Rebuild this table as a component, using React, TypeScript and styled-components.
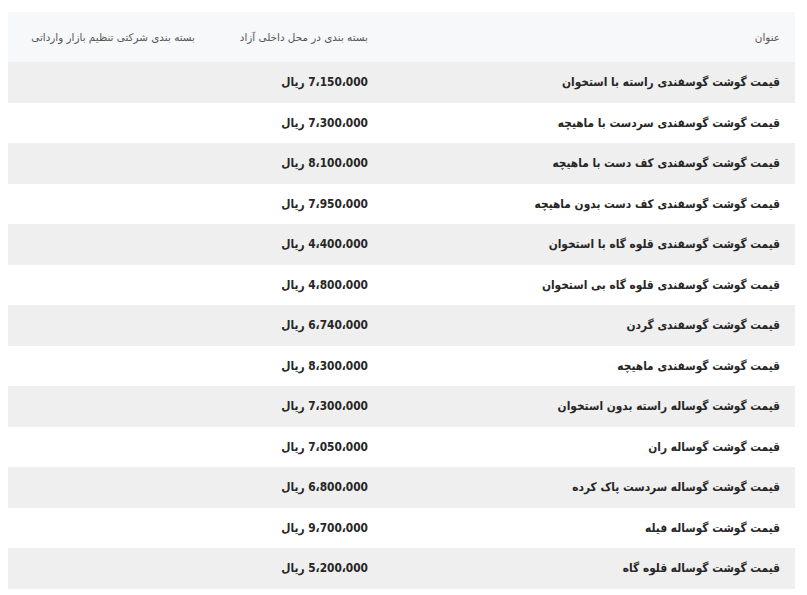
import React from "react";
import styled, { createGlobalStyle } from "styled-components";

const Global = createGlobalStyle`
  html, body { margin: 0; padding: 0; background: #ffffff; }
  body { font-family: "DejaVu Sans", "Liberation Sans", sans-serif; }
`;

const Page = styled.div`
  padding: 12px 12px 0 8px;
`;

const Table = styled.table`
  width: 787px;
  border-collapse: collapse;
  table-layout: fixed;
  direction: rtl;
`;

const HeadCell = styled.th<{ $w: number; $pr: number }>`
  box-sizing: border-box;
  width: ${(p) => p.$w}px;
  height: 50px;
  padding: 0 ${(p) => p.$pr}px 0 0;
  background: #f7f8f9;
  color: #555;
  font-family: "DejaVu Sans", sans-serif;
  font-size: 10.4px;
  font-weight: 400;
  text-align: right;
  vertical-align: middle;
  white-space: nowrap;
`;

const Row = styled.tr<{ $shade: boolean }>`
  background: ${(p) => (p.$shade ? "#efefef" : "#ffffff")};
`;

const Cell = styled.td<{ $pr: number }>`
  box-sizing: border-box;
  height: 40.5px;
  padding: 0 ${(p) => p.$pr}px 0 0;
  color: #262626;
  font-family: "DejaVu Sans Condensed", "DejaVu Sans", sans-serif;
  font-size: 11.8px;
  font-weight: 700;
  text-align: right;
  vertical-align: middle;
  white-space: nowrap;
`;

const rows: [string, string][] = [
  ["قیمت گوشت گوسفندی راسته با استخوان", "7،150،000 ریال"],
  ["قیمت گوشت گوسفندی سردست با ماهیچه", "7،300،000 ریال"],
  ["قیمت گوشت گوسفندی کف دست با ماهیچه", "8،100،000 ریال"],
  ["قیمت گوشت گوسفندی کف دست بدون ماهیچه", "7،950،000 ریال"],
  ["قیمت گوشت گوسفندی قلوه گاه با استخوان", "4،400،000 ریال"],
  ["قیمت گوشت گوسفندی قلوه گاه بی استخوان", "4،800،000 ریال"],
  ["قیمت گوشت گوسفندی گردن", "6،740،000 ریال"],
  ["قیمت گوشت گوسفندی ماهیچه", "8،300،000 ریال"],
  ["قیمت گوشت گوساله راسته بدون استخوان", "7،300،000 ریال"],
  ["قیمت گوشت گوساله ران", "7،050،000 ریال"],
  ["قیمت گوشت گوساله سردست پاک کرده", "6،800،000 ریال"],
  ["قیمت گوشت گوساله فیله", "9،700،000 ریال"],
  ["قیمت گوشت گوساله قلوه گاه", "5،200،000 ریال"],
];

export default function App() {
  return (
    <Page>
      <Global />
      <Table>
        <thead>
          <tr>
            <HeadCell $w={417} $pr={15}>عنوان</HeadCell>
            <HeadCell $w={173} $pr={10}>بسته بندی در محل داخلی آزاد</HeadCell>
            <HeadCell $w={197} $pr={10}>بسته بندی شرکتی تنظیم بازار وارداتی</HeadCell>
          </tr>
        </thead>
        <tbody>
          {rows.map(([title, price], i) => (
            <Row key={i} $shade={i % 2 === 0}>
              <Cell $pr={15}>{title}</Cell>
              <Cell $pr={10}>{price}</Cell>
              <Cell $pr={10}></Cell>
            </Row>
          ))}
        </tbody>
      </Table>
    </Page>
  );
}
